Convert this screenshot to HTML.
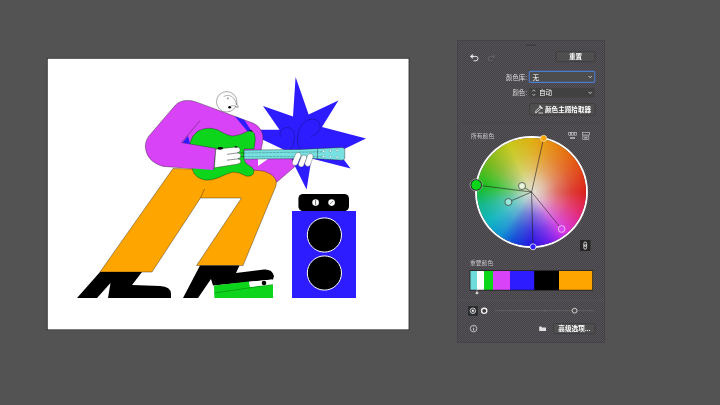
<!DOCTYPE html>
<html lang="zh-CN">
<head>
<meta charset="utf-8">
<title>重新着色图稿</title>
<style>
html,body{margin:0;padding:0;}
body{width:720px;height:405px;overflow:hidden;background:#535353;position:relative;font-family:"Liberation Sans","Noto Sans CJK SC",sans-serif;}
#art{position:absolute;left:0;top:0;width:720px;height:405px;}
#panel{position:absolute;left:457px;top:40px;width:148px;height:302.500px;background-color:#4c4a4f;background-image:conic-gradient(#555555 25%,#443f49 0 50%,#555555 0 75%,#443f49 0);background-size:2px 2px;box-sizing:border-box;border:1px solid #454347;}
#wheel{position:absolute;left:477.400px;top:137.750px;width:108.200px;height:108.200px;border-radius:50%;
 background:
  radial-gradient(circle closest-side at 52% 50%, rgba(224,222,208,1) 0%, rgba(224,222,208,0.780) 20%, rgba(224,222,208,0.420) 45%, rgba(224,222,208,0.160) 72%, rgba(224,222,208,0) 100%),
  conic-gradient(from 0deg,
   hsl(46,85%,47%) 0deg,
   hsl(39,88%,48%) 13deg,
   hsl(25,88%,48%) 45deg,
   hsl(10,82%,48%) 75deg,
   hsl(2,80%,48%) 90deg,
   hsl(338,78%,52%) 112deg,
   hsl(295,78%,55%) 141deg,
   hsl(264,85%,52%) 160deg,
   hsl(246,85%,48%) 179deg,
   hsl(222,85%,46%) 200deg,
   hsl(200,85%,45%) 216deg,
   hsl(184,85%,41%) 235deg,
   hsl(165,80%,40%) 255deg,
   hsl(122,78%,42%) 277deg,
   hsl(105,72%,43%) 290deg,
   hsl(84,72%,42%) 305deg,
   hsl(60,75%,45%) 335deg,
   hsl(46,85%,47%) 360deg);
 box-shadow:0 0 0 1.950px #fff;}
#ui{position:absolute;left:0;top:0;width:720px;height:405px;will-change:transform;}
#ui text{font-family:"Liberation Sans","Noto Sans CJK SC",sans-serif;}
</style>
</head>
<body>
<svg id="art" viewBox="0 0 720 405">
  <!-- artboard -->
  <rect x="46.900" y="57.900" width="362.400" height="272.200" fill="#222"/>
  <rect x="47.700" y="58.700" width="360.900" height="270.700" fill="#fff"/>
  <!-- star -->
  <polygon fill="#2c1cff" points="295.6,77 308.6,114.4 338.4,100.6 322,127 366,138.5 338,152 350.6,168.6 311.500,158.500 306.6,189.5 287.600,151.500 242,129.700 279.500,129.700 263,106 293,116.4"/>
  <path d="M280.500,137 C278.500,131 283,127 288,127.600 C293,128.500 295,133 294.500,138 C294,144 292,148 289,151 M311,136.500 C317,135 321,130 320,125 C319,119.500 313,118 308,120 C301,123 297.500,131 297.500,139 C297.500,144 299,148 302,151" fill="none" stroke="#15107a" stroke-width="0.5"/>
  <!-- head -->
  <circle cx="226.700" cy="101.800" r="10.200" fill="#fff" stroke="#444" stroke-width="0.45"/>
  <path d="M236.600,103 L238.400,107.200 L235.800,107.400" fill="#fff" stroke="#444" stroke-width="0.4"/>
  <path d="M223.600,96.600 Q229,93.500 233.500,98 Q236,101 236.600,105 M231,105.800 Q234,105 237.600,107" fill="none" stroke="#444" stroke-width="0.4"/>
  <circle cx="227.800" cy="98.400" r="0.900" fill="#888"/>
  <ellipse cx="229.700" cy="107.300" rx="1.400" ry="1.300" fill="#000"/>
  <!-- purple body -->
  <path fill="#d843f7" stroke="#222" stroke-width="0.4" d="M187.400,100.500 Q180,100.500 175.500,105 L148.500,136.500 Q144,143 145.800,150 Q148,162 163,166.400 L213.600,170 L260,180 L277,182 L295,166.400 L292,158.500 L261,150 Q263.500,140 262.800,135 Q261,126.800 253,123.100 L196,101.900 Q192,100.500 187.400,100.500 Z"/>
  <!-- orange pants -->
  <path fill="#ffa500" stroke="#222" stroke-width="0.4" d="M173,168.500 L100,272 L152,272 L200.500,198 L241.500,198 L196.500,265.600 L243,265.600 L275.500,187 Q278.500,179.500 271,174.500 Q265,170.400 258,170.400 Z"/>
  <path d="M204.500,189 L200.500,198" stroke="#222" stroke-width="0.4" fill="none"/>
  <!-- strap -->
  <polygon fill="#2c1cff" points="234.800,116.300 244.300,119.900 249.700,128.200 251.800,131.400 247.200,131"/>
  <ellipse cx="250.800" cy="131.200" rx="1.600" ry="0.900" fill="#000" transform="rotate(20 250.800 131.200)"/>
  <!-- guitar body -->
  <path fill="#0dd51b" stroke="#222" stroke-width="0.4" d="M190,143 Q192,135 198,131 Q208,126 218,130 Q228,136 233,136 Q240,135.500 247.700,131.200 Q252.500,130 254.500,134 Q256,138 254.600,145 L254,149 L244,149 L244,159 Q245,164 250,166 Q255,169 253.500,173 Q252,177 246,176 Q239,172 233,172 Q226,174 220,177 Q212,181 205,180 Q195,178 192.500,170 Z"/>
  <!-- white gap -->
  <polygon fill="#fff" points="258,159 268,159 258,166"/>
  <!-- forearm over guitar -->
  <path fill="#d843f7" d="M181.500,142.600 L216,148.400 L213.600,169.900 L180,167.500 Z"/>
  <path d="M200,120.600 L181.500,142.600 L216,148.400 L213.600,170" stroke="#222" stroke-width="0.4" fill="none"/>
  <polygon fill="#2c1cff" points="182.400,142.800 188,136 190,144"/>
  <!-- neck -->
  <path fill="#78e0e0" stroke="#222" stroke-width="0.4" d="M244,150.200 L300,149.400 L342,147.400 Q344.800,147.400 344.800,150 L344.800,157.600 Q344.800,160.400 342,160.200 L313,158.500 L244,159.200 Z"/>
  <path d="M244,153 L322,151.800 M244,156.600 L322,156.600" stroke="#2a6a6a" stroke-width="0.4" stroke-dasharray="3 0.6" fill="none"/>
  <line x1="317.500" y1="148.700" x2="317.500" y2="158.800" stroke="#222" stroke-width="0.4"/>
  <g fill="#fff" stroke="#2a6a6a" stroke-width="0.3">
    <circle cx="323.600" cy="151.400" r="1.100"/><circle cx="330.400" cy="151" r="1.100"/><circle cx="337.200" cy="150.600" r="1.100"/>
    <circle cx="323.600" cy="156.600" r="1.100"/><circle cx="330.400" cy="156.800" r="1.100"/><circle cx="337.200" cy="157.200" r="1.100"/>
  </g>
  <!-- picking hand -->
  <path fill="#fff" stroke="#222" stroke-width="0.4" d="M215.800,149.200 L236.500,146.900 Q240.200,147 240.200,149.800 Q240.200,152.300 237.500,152.800 Q240.800,153 240.800,155.800 Q240.800,158.300 238,158.800 Q241,159.200 240.800,161.600 Q240.500,164 237,164.200 L214.400,167.800 Z"/>
  <path d="M227,154.300 L238.500,152.800 M227,160.200 L239,158.700" stroke="#222" stroke-width="0.5" fill="none"/>
  <ellipse cx="220.300" cy="148.300" rx="2.800" ry="1.400" fill="#000"/>
  <ellipse cx="236" cy="146.900" rx="1.400" ry="0.600" fill="#000"/>
  <path d="M240.300,152.700 L244,153 M240.500,156.400 L244,156.600" stroke="#222" stroke-width="0.400" fill="none"/>
  <!-- fretting hand -->
  <g fill="#fff" stroke="#222" stroke-width="0.3">
    <rect x="-2.800" y="-6.800" width="5.600" height="13.600" rx="2.800" transform="translate(296.600,159) rotate(23)"/>
    <rect x="-2.800" y="-6.200" width="5.600" height="12.400" rx="2.800" transform="translate(302.600,161) rotate(23)"/>
    <rect x="-2.900" y="-6.600" width="5.800" height="13.200" rx="2.900" transform="translate(309,160) rotate(19)"/>
  </g>
  <!-- boots -->
  <path fill="#000" d="M100,272 L142,272 L132,285 L160,286 Q171,286.500 171,294 L171,298 L108,298 L110.500,283 L97,298 L77,298 Z"/>
  <path fill="#000" d="M200,265.600 L239.500,265.600 L236,273 L264,269.600 Q272,269 274,276 L273,279.500 L250,282 L213,285.500 L211,279 L198,298 L183,298 Z"/>
  <!-- pedal -->
  <path fill="#0dd51b" d="M214,285.600 L249,281.600 L250,287 L273,284.400 L273,298 L214.400,298 Z"/>
  <polygon fill="#fff" points="249,281.600 272,279.500 273,284.400 250,287"/>
  <circle cx="264" cy="283" r="2.300" fill="#000"/>
  <path d="M214.400,293 L273,284.400" stroke="#0a5a10" stroke-width="0.4"/>
  <!-- speaker -->
  <rect x="298.400" y="194" width="50.600" height="17.200" rx="4.600" fill="#000"/>
  <rect x="292" y="211" width="64" height="87" fill="#2c1cff"/>
  <circle cx="315.600" cy="202.600" r="3.300" fill="#fff"/>
  <circle cx="331.600" cy="202.600" r="3.300" fill="#fff"/>
  <path d="M315.600,200 L315.600,205.200 M329.800,204.400 L333.400,200.800" stroke="#555" stroke-width="0.8"/>
  <circle cx="324.400" cy="235" r="17.100" fill="#000" stroke="#fff" stroke-width="1"/>
  <circle cx="324.400" cy="273" r="17.100" fill="#000" stroke="#fff" stroke-width="1"/>
</svg>

<div id="panel"></div>
<div id="wheel"></div>

<svg id="ui" viewBox="0 0 720 405">
  <!-- grip -->
  <rect x="526" y="44.400" width="10" height="1.400" rx="0.700" fill="#3a3a3a"/>
  <!-- undo / redo -->
  <g fill="none" stroke="#ececec" stroke-width="1" stroke-linecap="round" stroke-linejoin="round">
    <path d="M471.500,56.400 L475.800,56.400 Q478,56.400 478,58.600 Q478,60.800 475.800,60.800 L474,60.800"/>
    <path d="M472.400,54.600 L470.300,56.400 L472.400,58.200 Z" fill="#ececec" stroke-width="0.600"/>
  </g>
  <g fill="none" stroke="#656565" stroke-width="0.900" stroke-linecap="round" stroke-linejoin="round">
    <path d="M494,56.600 L490.200,56.600 Q488.200,56.600 488.200,58.600 Q488.200,60.600 490.200,60.600 L491.800,60.600"/>
    <path d="M493.200,55 L495,56.600 L493.200,58.200 Z" fill="#656565" stroke-width="0.500"/>
  </g>
  <!-- reset button -->
  <rect x="556" y="51.600" width="39" height="10" rx="1.500" fill="#4f4f4f" stroke="#3b3b3b" stroke-width="0.8"/>
  <text x="575.600" y="59" font-size="6.600" fill="#fff" text-anchor="middle" font-weight="bold">重置</text>
  <!-- 颜色库 -->
  <text x="527" y="79.800" font-size="6.400" fill="#dcdcdc" text-anchor="end">颜色库:</text>
  <rect x="529.200" y="71.400" width="65.600" height="11" rx="1.500" fill="#4d4d4d" stroke="#4a7ccf" stroke-width="1.100"/>
  <text x="532.500" y="79.600" font-size="6.600" fill="#fff">无</text>
  <path d="M588.600,76 L590.200,77.800 L591.800,76" fill="none" stroke="#e0e0e0" stroke-width="0.800"/>
  <!-- 颜色 -->
  <text x="527" y="94.800" font-size="6.400" fill="#dcdcdc" text-anchor="end">颜色:</text>
  <rect x="529" y="88" width="65.600" height="9.400" rx="1" fill="#414141"/>
  <path d="M532.400,91.400 L533.800,89.800 L535.200,91.400 M532.400,94 L533.800,95.600 L535.200,94" fill="none" stroke="#e0e0e0" stroke-width="0.700"/>
  <text x="539" y="95" font-size="6.600" fill="#fff">自动</text>
  <path d="M588.600,91.800 L590.200,93.600 L591.800,91.800" fill="none" stroke="#e0e0e0" stroke-width="0.800"/>
  <!-- theme picker button -->
  <rect x="529.600" y="103.600" width="65.400" height="11.400" rx="1.500" fill="#4f4f4f" stroke="#3b3b3b" stroke-width="0.800"/>
  <g stroke="#e8e8e8" fill="none" stroke-width="0.900" stroke-linecap="round">
    <path d="M535.600,112.400 L536,110.800 L539.600,107.200 L540.800,108.400 L537.200,112 Z"/>
    <path d="M539.800,106 L542,108.200" stroke-width="1.400"/>
    <path d="M538.800,113 L542.600,113" stroke-width="0.800"/>
  </g>
  <text x="545" y="111.900" font-size="6.600" fill="#fff" font-weight="bold">颜色主题拾取器</text>
  <!-- separator -->
  <line x1="462" y1="123" x2="600" y2="123" stroke="#444" stroke-width="0.600"/>
  <!-- 所有颜色 -->
  <text x="471" y="137.800" font-size="5.800" fill="#c6c6c6">所有颜色</text>
  <g fill="none" stroke="#d0d0d0" stroke-width="0.600">
    <rect x="568.700" y="132.400" width="2" height="2.800"/><rect x="571.500" y="132.400" width="2" height="2.800"/><rect x="574.300" y="132.400" width="2" height="2.800"/>
    <rect x="582.300" y="132.400" width="7" height="2.600"/>
    <rect x="582.800" y="136" width="6" height="3.600"/>
  </g>
  <rect x="570" y="137.300" width="5" height="1.400" fill="#c8c8c8"/>
  <rect x="584.300" y="137.200" width="3" height="1.300" fill="#c8c8c8"/>
  <!-- wheel lines -->
  <g stroke="#222" stroke-width="0.600" fill="none">
    <line x1="531.600" y1="192" x2="543.600" y2="138.400"/>
    <line x1="531.600" y1="192" x2="476" y2="185"/>
    <line x1="531.600" y1="192" x2="522" y2="186"/>
    <line x1="531.600" y1="192" x2="508.400" y2="202"/>
    <line x1="531.600" y1="192" x2="561.600" y2="229"/>
    <line x1="531.600" y1="192" x2="533" y2="246.600"/>
  </g>
  <circle cx="543.600" cy="138.400" r="3.100" fill="#ffa500" stroke="#f4e8d0" stroke-width="0.700"/>
  <circle cx="476.200" cy="185" r="6.100" fill="#111" stroke="#d8d8d8" stroke-width="0.600"/>
  <circle cx="476.200" cy="185" r="4.900" fill="#0dd51b"/>
  <circle cx="522" cy="186" r="3.500" fill="#e8f4dc" stroke="#333" stroke-width="0.700"/>
  <circle cx="508.400" cy="202" r="3.500" fill="#9ae6d8" stroke="#333" stroke-width="0.700"/>
  <circle cx="561.600" cy="229" r="3.400" fill="#d843f7" stroke="#eee" stroke-width="0.700"/>
  <circle cx="533" cy="246.800" r="3" fill="#2c1cff" stroke="#eee" stroke-width="0.800"/>
  <!-- link icon -->
  <rect x="580" y="240" width="10.400" height="11" fill="#262626"/>
  <rect x="583.800" y="242" width="2.800" height="4.400" rx="1.400" fill="none" stroke="#f0f0f0" stroke-width="0.800"/>
  <rect x="583.800" y="244.800" width="2.800" height="4.400" rx="1.400" fill="none" stroke="#f0f0f0" stroke-width="0.800"/>
  <!-- 重要颜色 -->
  <text x="470" y="264.600" font-size="5.800" fill="#c6c6c6">重要颜色</text>
  <rect x="470" y="270.600" width="122.600" height="19.600" fill="#000" stroke="#2a2a2a" stroke-width="0.800"/>
  <rect x="470.400" y="271" width="6.600" height="18.800" fill="#6fdcdc"/>
  <rect x="477" y="271" width="7" height="18.800" fill="#fff"/>
  <rect x="484" y="271" width="9" height="18.800" fill="#0dd51b"/>
  <rect x="493" y="271" width="17" height="18.800" fill="#d843f7"/>
  <rect x="510" y="271" width="24.400" height="18.800" fill="#2c1cff"/>
  <rect x="534.400" y="271" width="24.600" height="18.800" fill="#000"/>
  <rect x="559" y="271" width="33.200" height="18.800" fill="#ffa500"/>
  <path d="M477,290 L477,292 M475.800,293.800 Q475.800,292 477,292 Q478.200,292 478.200,293.800 Z" fill="#e8e8e8" stroke="#e8e8e8" stroke-width="0.500"/>
  <line x1="458" y1="300.300" x2="604" y2="300.300" stroke="#5a585c" stroke-width="0.600"/>
  <!-- slider row -->
  <rect x="468.200" y="306.100" width="9.600" height="9.600" fill="#262a2a"/>
  <circle cx="472.900" cy="310.800" r="2.800" fill="#555" stroke="#d4d4d4" stroke-width="0.800"/>
  <rect x="472" y="309.900" width="1.800" height="1.800" fill="#f4f4f4"/>
  <circle cx="484.200" cy="310.800" r="2.600" fill="#3a3a3a" stroke="#f0f0f0" stroke-width="1.400"/>
  <line x1="495" y1="310.700" x2="594" y2="310.700" stroke="#6a6a6a" stroke-width="0.700"/>
  <line x1="545" y1="309.500" x2="545" y2="312" stroke="#6a6a6a" stroke-width="0.700"/>
  <circle cx="574.600" cy="310.700" r="2.400" fill="#4a4a4a" stroke="#f0f0f0" stroke-width="0.800"/>
  <!-- footer -->
  <circle cx="473.600" cy="328.600" r="3.300" fill="none" stroke="#e8e8e8" stroke-width="0.700"/>
  <path d="M473.600,327.800 L473.600,330.600 M473.600,326.400 L473.600,326.900" stroke="#e8e8e8" stroke-width="0.800"/>
  <path d="M539.200,326.600 L541.400,326.600 L542,327.400 L546,327.400 L546,331 L539.200,331 Z" fill="#e0e0e0"/>
  <rect x="553.600" y="323.600" width="41.400" height="10" rx="1.500" fill="#4f4f4f" stroke="#3b3b3b" stroke-width="0.800"/>
  <text x="574.300" y="331" font-size="6.600" fill="#fff" text-anchor="middle" font-weight="bold">高级选项...</text>
</svg>
</body>
</html>
